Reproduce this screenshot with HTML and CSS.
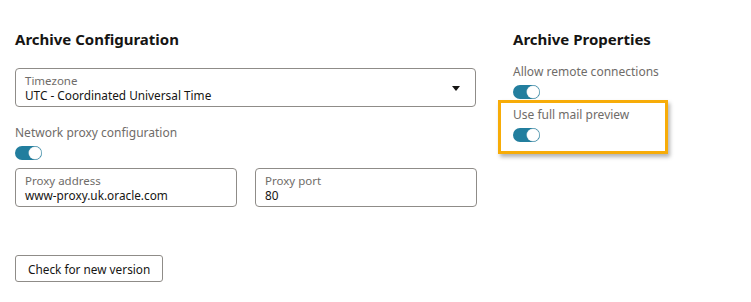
FILE: index.html
```
<!DOCTYPE html>
<html>
<head>
<meta charset="utf-8">
<link rel="stylesheet" href="styles.css">
</head>
<body>
<div class="page">
  <section class="col-left">
    <h2 class="heading">Archive Configuration</h2>
    <div class="field select-field">
      <div class="field-text">
        <span class="field-label">Timezone</span>
        <span class="field-value">UTC - Coordinated Universal Time</span>
      </div>
      <svg class="caret" width="8" height="5" viewBox="0 0 8 5"><path d="M0 0 H8 L4 5 Z" fill="#161513"/></svg>
    </div>
    <div class="plain-label proxy-label">Network proxy configuration</div>
    <span class="toggle"><span class="knob"></span></span>
    <div class="row">
      <div class="field small">
        <div class="field-text">
          <span class="field-label">Proxy address</span>
          <span class="field-value">www-proxy.uk.oracle.com</span>
        </div>
      </div>
      <div class="field small">
        <div class="field-text">
          <span class="field-label">Proxy port</span>
          <span class="field-value">80</span>
        </div>
      </div>
    </div>
    <button class="btn">Check for new version</button>
  </section>
  <section class="col-right">
    <h2 class="heading">Archive Properties</h2>
    <div class="prop">
      <div class="plain-label">Allow remote connections</div>
      <span class="toggle"><span class="knob"></span></span>
    </div>
    <div class="prop highlight">
      <div class="plain-label">Use full mail preview</div>
      <span class="toggle"><span class="knob"></span></span>
    </div>
  </section>
</div>
</body>
</html>
```
FILE: styles.css
```
* { box-sizing: border-box; }
html, body { margin: 0; padding: 0; background: #fff; }
body {
  font-family: "Noto Sans", "Open Sans", sans-serif;
  color: #161513;
  width: 751px;
  height: 302px;
  overflow: hidden;
}
.page {
  display: flex;
  padding: 29px 0 0 15px;
}
.col-left {
  width: 461px;
  display: flex;
  flex-direction: column;
  align-items: flex-start;
}
.col-right {
  margin-left: 37px;
  width: 200px;
  display: flex;
  flex-direction: column;
  align-items: flex-start;
}
.heading {
  margin: 0;
  font-size: 15px;
  font-weight: 700;
  line-height: 20px;
  color: #161513;
}
.field {
  border: 1px solid #8f8c88;
  border-radius: 4px;
  height: 39px;
  display: flex;
  align-items: center;
  padding: 0 9px;
}
.select-field {
  margin-top: 19px;
  width: 461px;
  justify-content: space-between;
  padding-right: 15px;
}
.field-text {
  display: flex;
  flex-direction: column;
  line-height: 14px;
}
.field-label {
  font-size: 11.5px;
  color: #6f6c69;
}
.field-value {
  font-size: 11.8px;
  color: #161513;
}
.caret { margin-top: 1px; }
.plain-label {
  font-size: 12px;
  line-height: 15px;
  color: #6f6c69;
}
.proxy-label { margin-top: 18px; }
.toggle {
  display: inline-flex;
  align-items: center;
  justify-content: flex-end;
  width: 27px;
  height: 14px;
  border-radius: 7px;
  background: #227e9e;
  padding: 1px;
  margin-top: 6px;
}
.knob {
  width: 12px;
  height: 12px;
  border-radius: 50%;
  background: #fff;
  box-shadow: 0 0 0 0.5px #c9d8de;
}
.row {
  display: flex;
  gap: 18px;
  margin-top: 8px;
}
.field.small { width: 222px; }
.btn {
  margin-top: 48px;
  font-family: inherit;
  font-size: 11.8px;
  color: #161513;
  background: #fff;
  border: 1px solid #8f8c88;
  border-radius: 3px;
  height: 27px;
  padding: 0 12px;
}
.prop { display: flex; flex-direction: column; align-items: flex-start; }
.col-right .prop:first-of-type { margin-top: 15px; }
.highlight {
  margin-left: -15px;
  margin-top: 1px;
  width: 170px;
  padding: 4px 12px 9px 12px;
  border: 3px solid #f7ac08;
  box-shadow: 2px 3px 4px rgba(0,0,0,0.3);
}
```
